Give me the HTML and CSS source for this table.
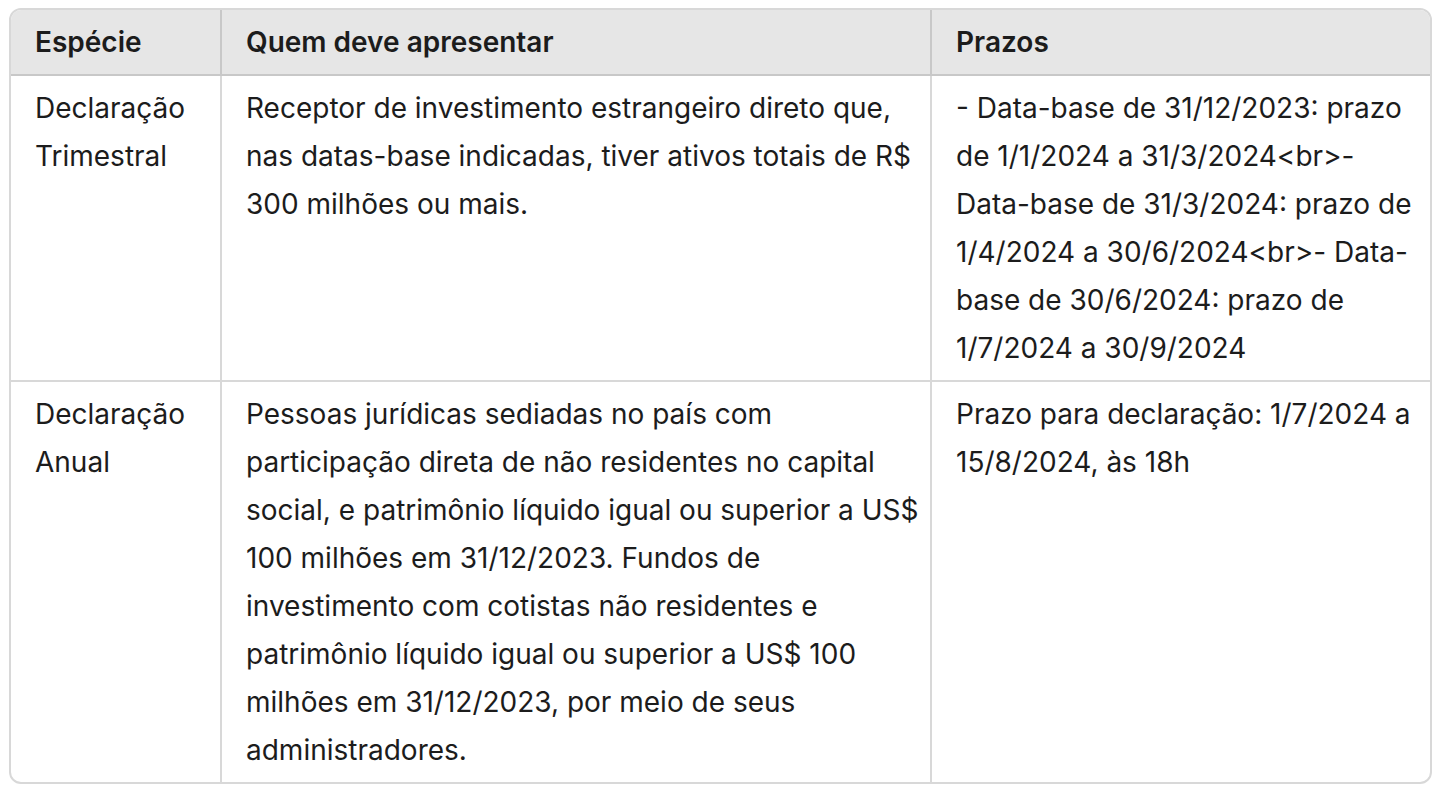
FILE: index.html
```html
<!DOCTYPE html>
<html lang="pt-BR">
<head>
  <meta charset="UTF-8">
  <title>Declarações</title>
  <link rel="stylesheet" href="styles.css">
</head>
<body>
  <div class="table-wrap">
    <table class="data">
      <colgroup>
        <col class="col-kind">
        <col class="col-who">
        <col class="col-when">
      </colgroup>
      <thead>
        <tr>
          <th>Espécie</th>
          <th>Quem deve apresentar</th>
          <th>Prazos</th>
        </tr>
      </thead>
      <tbody>
        <tr>
          <td>Declaração Trimestral</td>
          <td>Receptor de investimento estrangeiro direto que, nas datas-base indicadas, tiver ativos totais de R$ 300 milhões ou mais.</td>
          <td>- Data-base de 31/12/2023: prazo de 1/1/2024 a 31/3/2024&lt;br&gt;- Data-base de 31/3/2024: prazo de 1/4/2024 a 30/6/2024&lt;br&gt;- Data-base de 30/6/2024: prazo de 1/7/2024 a 30/9/2024</td>
        </tr>
        <tr>
          <td>Declaração Anual</td>
          <td>Pessoas jurídicas sediadas no país com participação direta de não residentes no capital social, e patrimônio líquido igual ou superior a US$ 100 milhões em 31/12/2023. Fundos de investimento com cotistas não residentes e patrimônio líquido igual ou superior a US$ 100 milhões em 31/12/2023, por meio de seus administradores.</td>
          <td>Prazo para declaração: 1/7/2024 a 15/8/2024, às 18h</td>
        </tr>
      </tbody>
    </table>
  </div>
</body>
</html>
```

FILE: styles.css
```css
* {
  box-sizing: border-box;
}

body {
  margin: 8px 4px 8px 9px;
  background: #ffffff;
  font-family: Inter, 'Noto Sans', sans-serif;
  color: #1c1c1c;
}

.table-wrap {
  border: 2px solid #d8d8d8;
  border-radius: 12px;
  overflow: hidden;
}

.data {
  width: 100%;
  border-collapse: collapse;
  table-layout: fixed;
  font-size: 28px;
  line-height: 48px;
}

.col-kind {
  width: 210px;
}

.col-who {
  width: 710px;
}

th,
td {
  text-align: left;
  vertical-align: top;
  padding: 8px 6px 8px 24px;
  border-right: 2px solid #d8d8d8;
  border-bottom: 2px solid #d8d8d8;
}

th:last-child,
td:last-child {
  border-right: none;
}

tbody tr:last-child td {
  border-bottom: none;
}

th {
  background: #e6e6e6;
  font-weight: 600;
  border-color: #c8c8c8;
}
```
